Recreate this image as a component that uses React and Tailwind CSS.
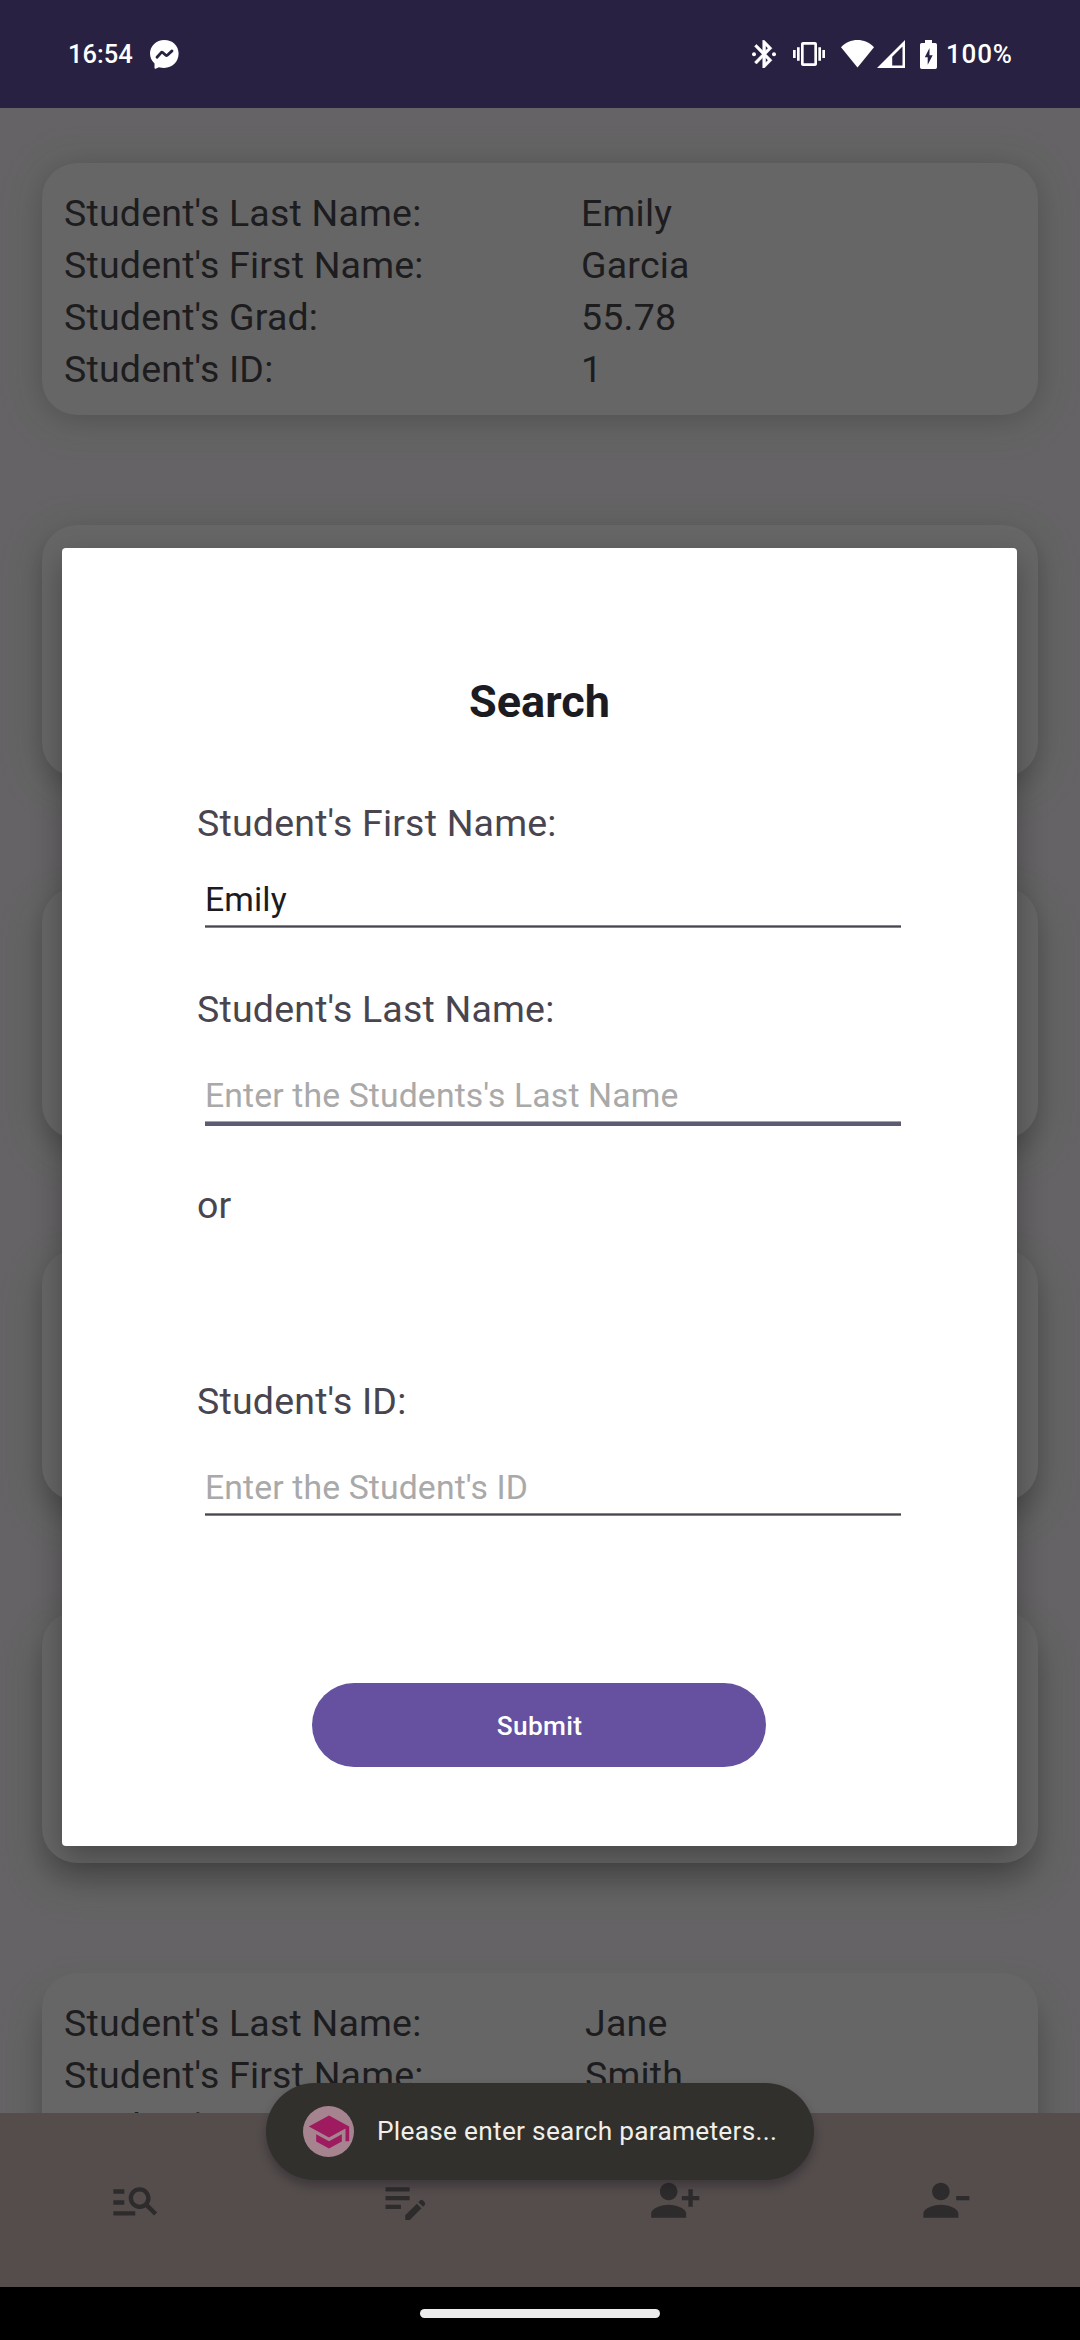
import React from "react";
import {
  MdEditNote,
  MdManageSearch,
  MdPersonAddAlt1,
  MdPersonRemove,
  MdSchool,
  MdVibration,
} from "react-icons/md";

const students = [
  {
    shadow:
      "shadow-[0_4px_34px_rgba(0,0,0,0.22),0_4px_8px_32px_#646564]",
    rows: [
      ["Student's Last Name:", "Emily"],
      ["Student's First Name:", "Garcia"],
      ["Student's Grad:", "55.78"],
      ["Student's ID:", "1"],
    ],
    column: "w-[517px]",
  },
  {
    shadow:
      "shadow-[0_8px_34px_rgba(0,0,0,0.24),0_10px_8px_32px_#646564]",
  },
  {
    shadow:
      "shadow-[0_11px_34px_rgba(0,0,0,0.26),0_13px_8px_32px_#646564]",
  },
  {
    shadow:
      "shadow-[0_14px_34px_rgba(0,0,0,0.27),0_16px_8px_32px_#646564]",
  },
  {
    shadow:
      "shadow-[0_18px_36px_rgba(0,0,0,0.28),0_20px_8px_32px_#646564]",
  },
  {
    shadow:
      "shadow-[0_24px_34px_rgba(0,0,0,0.28),0_24px_8px_32px_#646564]",
    rows: [
      ["Student's Last Name:", "Jane"],
      ["Student's First Name:", "Smith"],
      ["Student's Grad:", ""],
    ],
    column: "w-[521px]",
  },
];

function MessengerIcon() {
  return (
    <svg className="ml-[19px] h-[29px] w-[29px]" viewBox="0 0 29 29">
      <path
        fill="#fff"
        d="M14.3 0C6.3 0 0 5.9 0 13.6c0 4 1.7 7.300 4.500 9.900V28c0 .6.5 1 1.100.7l3.300-1.500c1.700.5 3.500.7 5.400.7 8 0 14.300-6 14.300-14.300S22.300 0 14.300 0Z"
      />
      <path
        fill="none"
        stroke="#282142"
        strokeWidth="2.8"
        strokeLinejoin="round"
        strokeLinecap="round"
        d="M7 17.200l4.200-4.600q.7-.7 1.500-.1l3.100 2.700q.7.6 1.500 0L22 10.900"
      />
    </svg>
  );
}

function BluetoothIcon() {
  return (
    <svg className="h-7 w-6" viewBox="0 0 24 28" fill="#fff">
      <path
        transform="translate(-4.300 -2.600) scale(1.370 1.400)"
        stroke="#fff"
        strokeWidth="0.4"
        d="M17.710 7.710L12 2h-1v7.590L6.410 5 5 6.410 10.590 12 5 17.590 6.410 19 11 14.410V22h1l5.710-5.710-4.300-4.290 4.300-4.290zM13 5.830l1.880 1.880L13 9.590V5.830zm1.880 10.460L13 18.170v-3.760l1.880 1.880z"
      />
      <circle cx="2" cy="14.200" r="2" />
      <circle cx="22" cy="14.200" r="2" />
    </svg>
  );
}

function WifiIcon() {
  return (
    <svg className="ml-4 h-[28px] w-[33px]" viewBox="0 0 33 28" fill="#fff">
      <path d="M16.500 27.500L0 7.300C4.600 2.400 10.400 0 16.500 0S28.400 2.400 33 7.300Z" />
    </svg>
  );
}

function SignalIcon() {
  return (
    <svg className="ml-[3px] h-[28px] w-[28px]" viewBox="0 0 28 28" fill="#fff">
      <path
        fillRule="evenodd"
        d="M28 0v28H0ZM25.500 6.500L15.200 16.700v8.800h10.300Z"
      />
    </svg>
  );
}

function BatteryIcon() {
  return (
    <svg className="ml-[15px] h-[29px] w-[17px]" viewBox="0 0 17 29">
      <path
        fill="#fff"
        d="M5 0h7v3h3.200Q17 3 17 4.800v22.400Q17 29 15.200 29H1.800Q0 29 0 27.200V4.800Q0 3 1.800 3H5Z"
      />
      <path fill="#282142" d="M9.500 8L4.800 17.300h2.900v7.500l5-9.500H9.500Z" />
    </svg>
  );
}

function StatusBar() {
  return (
    <header className="flex h-[108px] items-center bg-[#282142] pl-[68px] pr-[68px] text-[25.500px] font-medium text-white">
      <span className="w-[63px] whitespace-nowrap">16:54</span>
      <MessengerIcon />
      <div className="ml-auto flex items-center">
        <BluetoothIcon />
        <MdVibration className="ml-[17px] h-8 w-8 text-white" />
        <WifiIcon />
        <SignalIcon />
        <BatteryIcon />
        <span className="ml-[9px] w-[66px] whitespace-nowrap text-[26px] tracking-[0.800px]">
          100%
        </span>
      </div>
    </header>
  );
}

function StudentCard({ shadow, rows = [], column }) {
  return (
    <article
      className={`h-[252px] shrink-0 rounded-[35px] bg-[#666666] pl-[22px] pt-6 ${shadow}`}
    >
      {rows.map(([label, value]) => (
        <div
          key={label}
          className="flex text-[37.500px] leading-[52px] tracking-[0.200px] text-[#1d1c1e]"
        >
          <span className={column}>{label}</span>
          <span>{value}</span>
        </div>
      ))}
    </article>
  );
}

function Label({ children, className }) {
  return (
    <div
      className={`text-[37.500px] leading-[44px] tracking-[0.200px] text-[#49454f] ${className}`}
    >
      {children}
    </div>
  );
}

function Field({ value, hint, className, line }) {
  return (
    <div className={`ml-2 w-[696px] ${className}`}>
      <div
        className={`h-[45px] text-[33.750px] leading-[40px] tracking-[0.120px] ${
          value ? "text-[#1c1b1f]" : "text-[#a9a9a9]"
        }`}
      >
        {value || hint}
      </div>
      <div className={line} />
    </div>
  );
}

function SearchDialog() {
  return (
    <section className="absolute left-[62px] top-[548px] h-[1298px] w-[955px] rounded-[4px] bg-white px-[135px] pt-[127px] shadow-[0_12px_30px_rgba(0,0,0,0.3)]">
      <h1 className="-mx-[135px] text-center text-[45px] font-bold leading-[54px] text-[#1c1b1f]">
        Search
      </h1>
      <Label className="mt-[72px]">Student's First Name:</Label>
      <Field
        value="Emily"
        className="mt-[35px]"
        line="h-[3px] border-y border-[#85838a] bg-[#49454f]"
      />
      <Label className="mt-[59px]">Student's Last Name:</Label>
      <Field
        hint="Enter the Students's Last Name"
        className="mt-[45px]"
        line="h-[5px] border-t border-[#a3a2b0] bg-[#5d5b70]"
      />
      <Label className="mt-[57px]">or</Label>
      <Label className="mt-[152px]">Student's ID:</Label>
      <Field
        hint="Enter the Student's ID"
        className="mt-[45px]"
        line="h-[3px] border-y border-[#85838a] bg-[#49454f]"
      />
      <button className="ml-[115px] mt-[167px] flex h-[84px] w-[454px] items-center justify-center rounded-full bg-[#65519f] pl-px pt-[3px] text-[26.250px] font-medium tracking-[0.300px] text-white">
        Submit
      </button>
    </section>
  );
}

function Toast() {
  return (
    <div className="absolute left-[266px] top-[2083px] flex h-[97px] w-[548px] items-center rounded-full bg-[#31302d] pl-[37px] shadow-[0_6px_10px_rgba(30,25,35,0.4)]">
      <div className="flex h-[51px] w-[51px] items-center justify-center rounded-full bg-[#a58490]">
        <MdSchool className="h-[44px] w-[44px] text-[#9f1b60]" />
      </div>
      <span className="ml-[23px] whitespace-nowrap text-[26.250px] tracking-[0.280px] text-[#f0efea]">
        Please enter search parameters...
      </span>
    </div>
  );
}

export default function App() {
  return (
    <div className="relative flex h-[2340px] w-[1080px] flex-col overflow-hidden bg-black font-[Roboto,sans-serif]">
      <StatusBar />
      <main className="flex h-[2005px] flex-col gap-[110px] overflow-hidden bg-[#666366] px-[42px] pt-[55px]">
        {students.map((s, i) => (
          <StudentCard key={i} {...s} />
        ))}
      </main>
      <nav className="grid h-[174px] grid-cols-4 justify-items-center bg-[#544d4c] pt-[61px] text-[52.500px] text-[#2d2b2c]">
        <MdManageSearch />
        <MdEditNote />
        <MdPersonAddAlt1 />
        <MdPersonRemove />
      </nav>
      <footer className="flex h-[53px] justify-center bg-black pt-[22px]">
        <div className="h-[9px] w-60 rounded-full bg-[#ebebeb]" />
      </footer>
      <SearchDialog />
      <Toast />
    </div>
  );
}
